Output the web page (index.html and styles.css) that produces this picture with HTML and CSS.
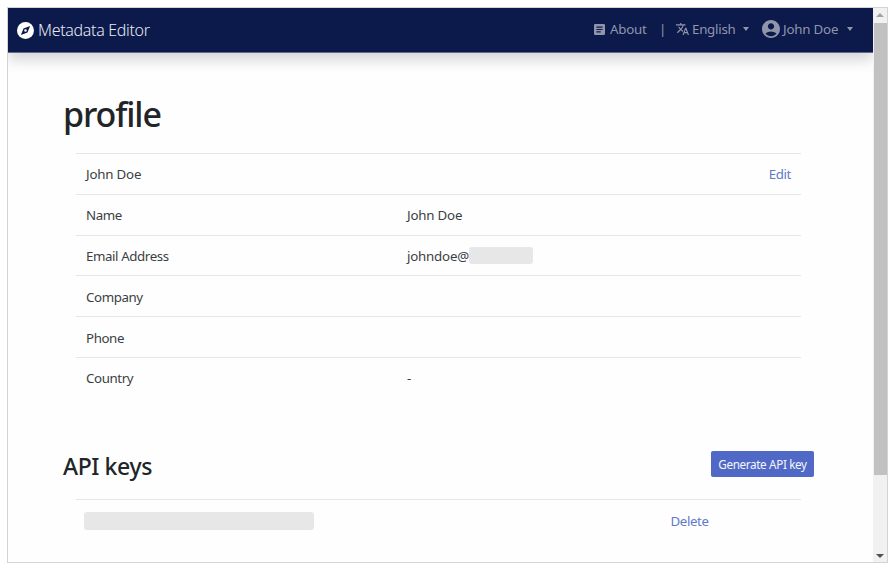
FILE: index.html
```html
<!DOCTYPE html>
<html lang="en">
<head>
<meta charset="utf-8">
<title>Metadata Editor</title>
<link rel="stylesheet" href="styles.css">
</head>
<body>
<div class="window">
  <div class="page">
    <header class="navbar">
      <a class="brand">
        <svg class="icon-compass" viewBox="0 0 24 24"><circle cx="12" cy="12" r="12" fill="#fff"/><path fill="#0c194b" fill-rule="evenodd" d="M18.5 5.5 14.8 14.8 5.5 18.5 9.2 9.2zM12 10.2a1.8 1.8 0 1 0 0 3.6 1.8 1.8 0 0 0 0-3.6z"/></svg>
        <span>Metadata Editor</span>
      </a>
      <nav class="menu">
        <a class="about"><svg class="icon-article" viewBox="3 3 18 18"><path d="M19 3H5c-1.100 0-2 .9-2 2v14c0 1.100.9 2 2 2h14c1.100 0 2-.9 2-2V5c0-1.100-.9-2-2-2zm-5 14H7v-2h7v2zm3-4H7v-2h10v2zm0-4H7V7h10v2z"/></svg><span>About</span></a>
        <span class="divider">|</span>
        <a class="language"><svg class="icon-translate" viewBox="1 2 22 20"><path d="M12.870 15.070l-2.540-2.510.03-.03A17.520 17.520 0 0 0 14.070 6H17V4h-7V2H8v2H1v2h11.170C11.500 7.920 10.440 9.750 9 11.350 8.070 10.320 7.300 9.190 6.690 8h-2c.73 1.630 1.730 3.170 2.980 4.560l-5.090 5.020L4 19l5-5 3.110 3.110.76-2.040zM18.500 10h-2L12 22h2l1.120-3h4.750L21 22h2l-4.500-12zm-2.620 7l1.620-4.330L19.120 17h-3.240z"/></svg><span>English</span><i class="caret"></i></a>
        <a class="account"><svg class="icon-account" viewBox="2 2 20 20"><path d="M12 2C6.480 2 2 6.480 2 12s4.480 10 10 10 10-4.480 10-10S17.520 2 12 2zm0 3.500c1.930 0 3.500 1.570 3.500 3.500s-1.570 3.500-3.500 3.500S8.500 10.930 8.500 9 10.070 5.500 12 5.500zM12 20c-2.500 0-4.710-1.140-6.200-2.920C7.300 15.500 10 14.700 12 14.700s4.700.8 6.200 2.380C16.710 18.860 14.500 20 12 20z"/></svg><span class="person">John Doe</span><i class="caret"></i></a>
      </nav>
    </header>
    <main class="content">
      <h1>profile</h1>
      <div class="details">
        <div class="row"><span class="person">John Doe</span><a class="link edit">Edit</a></div>
        <div class="row"><span>Name</span><span class="person">John Doe</span></div>
        <div class="row"><span>Email Address</span><span class="email"><span>johndoe@</span><i class="mask"></i></span></div>
        <div class="row"><span>Company</span></div>
        <div class="row"><span>Phone</span></div>
        <div class="row"><span>Country</span><span>-</span></div>
      </div>
      <section class="keys-head">
        <h2>API keys</h2>
        <button class="generate">Generate API key</button>
      </section>
      <div class="key-row"><i class="mask key"></i><a class="link">Delete</a></div>
    </main>
  </div>
  <div class="scrollbar"><i class="arrow up"></i><i class="thumb"></i><i class="arrow down"></i></div>
</div>
</body>
</html>
```
FILE: styles.css
```css
* { box-sizing: border-box; }
body {
  margin: 0;
  padding: 7px 3px 8px 7px;
  height: 571px;
  overflow: hidden;
  background: #fff;
  color: #3b3f43;
  font: 13.3px/20px "Noto Sans", "Open Sans", sans-serif;
  letter-spacing: -0.4px;
  white-space: nowrap;
}
.window {
  display: flex;
  height: 556px;
  border: 1px solid #d3d3d3;
  overflow: hidden;
}
.page { width: 865px; overflow: hidden; background: #fefefe; }
.navbar {
  display: flex;
  justify-content: space-between;
  height: 45px;
  padding: 0 20px 0 9px;
  background: #0c194b;
  border-bottom: 1px solid #62698a;
  box-shadow: 0 7px 13px rgba(0, 0, 0, .16);
  color: #9195ab;
}
.brand { display: flex; align-items: center; gap: 4px; height: 44px; color: #e7e9f0; font-size: 16px; font-weight: 300; letter-spacing: -0.32px; }
.icon-compass { width: 17px; height: 17px; }
.menu { display: flex; align-items: center; height: 42px; letter-spacing: -0.25px; }
.menu a { display: flex; align-items: center; }
.menu svg { fill: #9195ab; }
.icon-article { width: 11px; height: 11px; margin-right: 5px; }
.icon-translate { width: 13px; height: 12px; margin-right: 3px; }
.icon-account { width: 18px; height: 18px; margin-right: 3px; }
.about { width: 65px; }
.divider { width: 17px; }
.language { width: 86px; }
.account { width: 91px; }
.caret { margin-left: auto; border: 3.5px solid transparent; border-top: 4px solid #9195ab; border-bottom: 0; }
.language .caret { margin-right: 13px; }
.content { padding: 40px 59px 0 55px; }
h1, h2 { margin: 0; color: #212529; font-weight: 500; }
h1 { height: 60px; font-size: 34px; line-height: 43px; letter-spacing: -1.1px; }
.details { margin: 0 13px; }
.row {
  display: grid;
  grid-template-columns: 321px 1fr;
  align-items: center;
  height: 40.8px;
  padding: 1px 10px 0;
  border-top: 1px solid #e6e7e8;
}
.person { letter-spacing: -0.2px; }
.link { color: #6478c9; }
.edit { justify-self: end; }
.email { display: flex; align-items: center; letter-spacing: -0.2px; }
.mask { width: 64px; height: 17px; border-radius: 3px; background: #e7e7e7; }
.keys-head { display: flex; justify-content: space-between; align-items: flex-start; height: 48px; margin-top: 53px; }
h2 { font-size: 23px; line-height: 30px; letter-spacing: -0.4px; }
.generate {
  width: 103px;
  height: 26px;
  padding: 0;
  border: 0;
  border-radius: 2px;
  background: #5069c7;
  color: #f5f6fc;
  font: 11.7px "Noto Sans", sans-serif;
  letter-spacing: -0.35px;
}
.key-row {
  display: grid;
  grid-template-columns: 586.5px 1fr;
  align-items: center;
  height: 43px;
  margin: 0 13px;
  padding-left: 8px;
  border-top: 1px solid #e6e7e8;
}
.key { width: 230px; height: 18px; }
.scrollbar { display: flex; flex-direction: column; align-items: center; width: 14px; background: #f1f1f1; }
.arrow { border: 4px solid transparent; }
.up { margin: 5px 0 6px; border-top: 0; border-bottom-color: #a3a3a3; }
.thumb { width: 13px; height: 452px; background: #c1c1c1; }
.down { margin-top: auto; margin-bottom: 4px; border-bottom: 0; border-top-color: #505050; }
```
